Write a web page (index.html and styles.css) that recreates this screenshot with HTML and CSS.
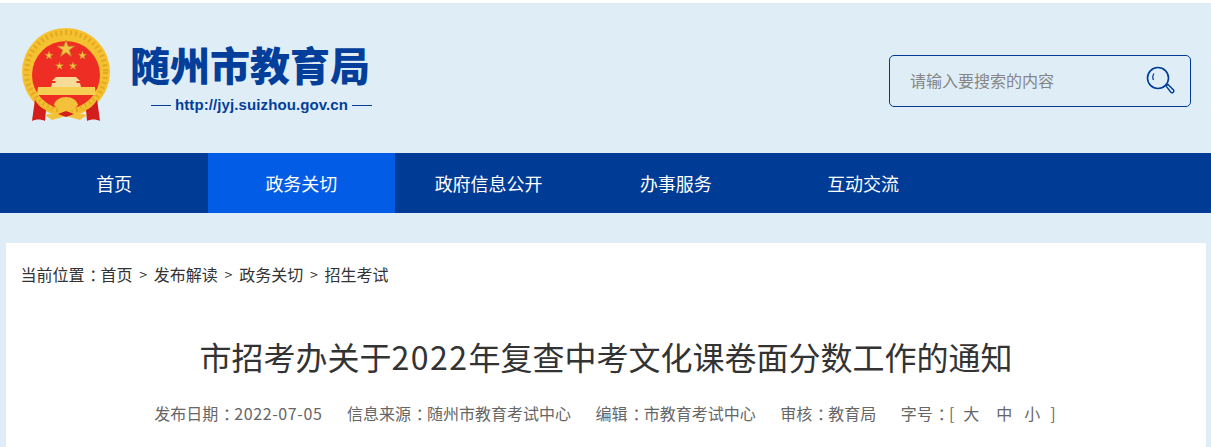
FILE: index.html
```html
<!DOCTYPE html>
<html lang="zh-CN">
<head>
    <meta charset="UTF-8">
    <title>市招考办关于2022年复查中考文化课卷面分数工作的通知</title>
    <link rel="stylesheet" href="styles.css">
</head>
<body>
    <div class="page">
        <div class="header">
            <div class="logo">
                <svg class="emblem" width="90" height="96" viewBox="21 27 90 96">
                    <defs>
                        <polygon id="star" points="0,-1 .225,-.309 .951,-.309 .363,.118 .588,.809 0,.382 -.588,.809 -.363,.118 -.951,-.309 -.225,-.309"/>
                    </defs>
                    <!-- ring -->
                    <circle cx="66" cy="72" r="44" fill="#f4c231"/>
                    <circle cx="66" cy="72" r="39.5" fill="none" stroke="#e5a823" stroke-width="5" stroke-dasharray="2 3"/>
                    <circle cx="66" cy="75" r="34" fill="#ee2d24"/>
                    <!-- stars -->
                    <g fill="#f3c544" stroke="#c98a2a" stroke-width=".1">
                        <use href="#star" transform="translate(66 49) scale(9)"/>
                        <use href="#star" transform="translate(49 55.5) scale(4.4)"/>
                        <use href="#star" transform="translate(82.5 55.5) scale(4.4)"/>
                        <use href="#star" transform="translate(59.5 66) scale(4.2)"/>
                        <use href="#star" transform="translate(73 66) scale(4.2)"/>
                    </g>
                    <!-- gate -->
                    <path d="M56 77 L76 77 L80 81 L76.5 81 L76.5 83 L80 83 L81 87 L51 87 L52 83 L55.5 83 L55.5 81 L52 81 Z" fill="#f6dc98"/>
                    <path d="M38 87 L95 87 L96 95 L37 95 Z" fill="#f6cf52"/>
                    <!-- drapes -->
                    <path d="M35 99 C38 104 42 108 46 110 L45 121 C41 119 36 119 32 121 C33 114 34 106 35 99 Z" fill="#d31f1c"/>
                    <path d="M97 99 C94 104 90 108 86 110 L87 121 C91 119 96 119 100 121 C99 114 98 106 97 99 Z" fill="#d31f1c"/>
                    <!-- ribbon and gears -->
                    <path d="M33 95 C38 103 46 108 54 109 L53 112 C44 111 36 105 33 95 Z" fill="#f0b92c"/>
                    <path d="M99 95 C94 103 86 108 78 109 L79 112 C88 111 96 105 99 95 Z" fill="#f0b92c"/>
                    <path d="M66 97 C72 97 77 100 78 105 C76 108 73 110 70 111 L87 115 L80 120 L66 116 L52 120 L45 115 L62 111 C59 110 56 108 54 105 C55 100 60 97 66 97 Z" fill="#f3c23a"/>
                    <path d="M58 114 L66 111 L74 114 L66 117 Z" fill="#d31f1c"/>
                </svg>
                <div class="site-name">
                    <h1>随州市教育局</h1>
                    <div class="site-url"><span class="dash"></span>http://jyj.suizhou.gov.cn<span class="dash"></span></div>
                </div>
            </div>
            <div class="search">
                <span class="search-text">请输入要搜索的内容</span>
                <svg width="30" height="30" viewBox="0 0 30 30" fill="none" stroke="#003c95">
                    <circle cx="13" cy="12" r="10.5" stroke-width="1.6"/>
                    <path d="M9 7.5 C7.5 9.5 7.5 12 8.5 14" stroke-width="1.2"/>
                    <path d="M21 20 L23 18.5 L28.5 24 C29.5 25.5 27.5 27.5 26 26.5 Z" stroke-width="1.4"/>
                </svg>
            </div>
        </div>
        <div class="nav">
            <a class="nav-item">首页</a>
            <a class="nav-item active">政务关切</a>
            <a class="nav-item">政府信息公开</a>
            <a class="nav-item">办事服务</a>
            <a class="nav-item">互动交流</a>
        </div>
        <div class="content">
            <div class="crumbs">
                <span>当前位置<span class="colon">：</span>首页</span><span class="sep">&gt;</span><span>发布解读</span><span class="sep">&gt;</span><span>政务关切</span><span class="sep">&gt;</span><span>招生考试</span>
            </div>
            <h2 class="title">市招考办关于<span class="year">2022</span>年复查中考文化课卷面分数工作的通知</h2>
            <div class="meta">
                <span>发布日期<span class="colon">：</span><span class="date">2022-07-05</span></span>
                <span>信息来源<span class="colon">：</span>随州市教育考试中心</span>
                <span>编辑<span class="colon">：</span>市教育考试中心</span>
                <span>审核<span class="colon">：</span>教育局</span>
                <span class="font-size">字号<span class="colon">：</span>[<b class="big">大</b><b class="mid">中</b><b class="small">小</b><i>]</i></span>
            </div>
        </div>
    </div>
</body>
</html>
```

FILE: styles.css
```css
html, body {
    margin: 0;
    padding: 0;
    height: 447px;
    overflow: hidden;
    background: #fff;
}
body {
    font-family: "Noto Sans CJK SC", "Liberation Sans", sans-serif;
    padding-top: 3px;
    box-sizing: border-box;
}
.page {
    background: #dfedf7;
    height: 444px;
}
.header {
    height: 150px;
    display: flex;
    align-items: center;
    justify-content: space-between;
    padding: 0 20px;
}
.logo {
    display: flex;
    align-items: flex-start;
    align-self: flex-start;
    padding-top: 24px;
}
.emblem {
    margin-right: 19px;
    margin-left: 1px;
    filter: blur(.4px);
}
.site-name {
    padding-top: 12px;
}
.site-name h1 {
    margin: 0;
    font-size: 40px;
    line-height: 50px;
    font-weight: 900;
    color: #033f9a;
}
.site-url {
    margin-top: 7px;
    padding-left: 21px;
    display: flex;
    align-items: center;
    font-family: "Liberation Sans", sans-serif;
    font-size: 15px;
    letter-spacing: .1px;
    font-weight: bold;
    line-height: 18px;
    color: #033f9a;
}
.dash {
    width: 20px;
    height: 1px;
    background: #033f9a;
    margin: 0 4px;
}
.dash:first-child {
    margin-left: 0;
}
.search {
    width: 265px;
    height: 50px;
    margin-top: 6px;
    border: 1px solid #003c95;
    border-radius: 5px;
    display: flex;
    align-items: center;
    justify-content: space-between;
    padding: 0 15px 0 20px;
}
.search-text {
    font-size: 16px;
    color: #858585;
    padding-bottom: 3px;
}
.nav {
    height: 60px;
    background: #003c95;
    display: flex;
    padding-left: 20.5px;
}
.nav-item {
    width: 187.25px;
    line-height: 60px;
    text-align: center;
    color: #fff;
    font-size: 18px;
}
.nav-item.active {
    background: #025ce6;
}
.content {
    margin: 30px 5px 0 6px;
    height: 204px;
    background: #fff;
    overflow: hidden;
}
/* half width colon with even margins, the original has it centred in its cell */
.colon {
    font-feature-settings: "halt";
    margin: 0 .2em 0 .3em;
}
.crumbs {
    display: flex;
    padding: 19px 0 0 14.5px;
    font-size: 16px;
    line-height: 24px;
    color: #333;
}
.sep {
    width: 21.3px;
    text-align: center;
    font-size: 14px;
}
.title {
    margin: 47px 0 0;
    font-size: 32px;
    line-height: 46px;
    font-weight: normal;
    text-align: center;
    color: #333;
}
.year {
    letter-spacing: 1.5px;
}
.meta {
    margin-top: 22px;
    padding-right: 2px;
    display: flex;
    justify-content: center;
    gap: 24.6px;
    font-size: 16px;
    line-height: 24px;
    color: #666;
}
.date {
    letter-spacing: .6px;
}
.font-size b {
    font-weight: normal;
}
.font-size i {
    font-style: normal;
    margin-left: 10px;
}
.big {
    margin-left: 9px;
}
.mid {
    margin-left: 17px;
}
.small {
    margin-left: 12px;
}
```
